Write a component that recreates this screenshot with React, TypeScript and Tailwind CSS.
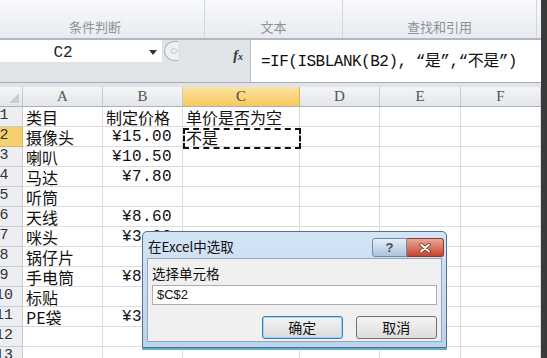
import React from 'react';

const cjk = { fontFamily: '"Noto Sans CJK SC", "Noto Sans", sans-serif' };
const mono = { fontFamily: '"Liberation Mono", "Noto Sans CJK SC", monospace' };

const cols = [
    { key: 'A', w: 80 },
    { key: 'B', w: 80 },
    { key: 'C', w: 117 },
    { key: 'D', w: 80 },
    { key: 'E', w: 81 },
    { key: 'F', w: 80 },
];

const rows: [string, string, string][] = [
    ['类目', '制定价格', '单价是否为空'],
    ['摄像头', '¥15.00', '不是'],
    ['喇叭', '¥10.50', ''],
    ['马达', '¥7.80', ''],
    ['听筒', '', ''],
    ['天线', '¥8.60', ''],
    ['咪头', '¥3.20', ''],
    ['锅仔片', '', ''],
    ['手电筒', '¥8.90', ''],
    ['标贴', '', ''],
    ['PE袋', '¥3.50', ''],
    ['', '', ''],
    ['', '', ''],
];

const Ribbon = () => (
    <div className="h-[40px] shrink-0 flex bg-gradient-to-b from-[#f8f9fb] to-[#e8ebef] border-b-2 border-[#b3b8c0]">
        {[
            { label: '条件判断', w: 205, cls: 'pr-[14px]' },
            { label: '文本', w: 138, cls: '' },
            { label: '查找和引用', w: 194, cls: '' },
        ].map((g) => (
            <div
                key={g.label}
                style={{ width: g.w }}
                className={'h-full flex items-end justify-center pb-[2px] border-r border-[#d3d7dd] text-[13px] text-[#8c929b] ' + g.cls}
            >
                <span style={cjk}>{g.label}</span>
            </div>
        ))}
        <div className="flex-1" />
    </div>
);

const FormulaBar = () => (
    <div className="h-[43px] shrink-0 flex bg-[#e0e4e9] border-b border-[#a9aeb6]">
        <div className="w-[250px] flex flex-col">
            <div className="h-[22px] flex items-center">
                <div className="w-[162px] h-full bg-white flex items-center relative">
                    <span className="flex-1 text-center text-[16px] text-[#222] pr-[36px] pt-[4px]" style={mono}>C2</span>
                    <span className="absolute left-[149px] top-[10px] w-0 h-0 border-l-[4px] border-r-[4px] border-t-[5px] border-l-transparent border-r-transparent border-t-[#333]" />
                </div>
                <div className="w-[14px] h-[20px] ml-[2px] rounded-l-full border border-r-0 border-[#aab0b8] bg-[#eef0f3] flex items-center justify-center">
                    <div className="w-[6px] h-[6px] rounded-full border border-[#c6cad0] ml-[4px]" />
                </div>
                <div className="flex-1 flex justify-end pr-[7px] pt-[8px]">
                    <span className="text-[14px] italic font-bold text-[#333]" style={{ fontFamily: '"Liberation Serif", serif' }}>
                        f<span className="text-[10px]">x</span>
                    </span>
                </div>
            </div>
        </div>
        <div className="flex-1 bg-white border-l border-[#b8bdc4] pl-[10px] pt-[8px]">
            <span className="text-[16px] text-[#111] whitespace-nowrap tracking-[-0.5px]" style={mono}>
                =IF(ISBLANK(B2), “是”,“不是”)
            </span>
        </div>
    </div>
);

const HeaderRow = () => (
    <div className="h-[20px] shrink-0 flex border-b border-[#aab1b9]">
        <div className="w-[23px] h-full bg-gradient-to-b from-[#f4f5f7] to-[#e3e6ea] border-r border-[#c3c7cd] relative">
            <span className="absolute right-[3px] bottom-[3px] w-[10px] h-[10px] bg-[#c9cdd3] [clip-path:polygon(100%_0,100%_100%,0_100%)]" />
        </div>
        {cols.map((c) => (
            <div
                key={c.key}
                style={{ width: c.w }}
                className={
                    'h-full flex items-center justify-center border-r text-[15px] ' +
                    (c.key === 'C'
                        ? 'bg-gradient-to-b from-[#fbe3a0] to-[#f6c95a] border-[#e2b34a] text-[#444]'
                        : 'bg-gradient-to-b from-[#f4f5f7] to-[#e3e6ea] border-[#c6cad0] text-[#555]')
                }
            >
                <span style={{ fontFamily: '"Liberation Serif", serif' }}>{c.key}</span>
            </div>
        ))}
    </div>
);

const Grid = () => (
    <div className="flex flex-col shrink-0">
        {rows.map((r, i) => (
            <div key={i} className="h-[20px] flex shrink-0">
                <div
                    className={
                        'w-[23px] h-full overflow-hidden border-r border-b ' +
                        (i === 1 ? 'bg-[#f6cf6e] border-[#e2b34a]' : 'bg-[#eceef1] border-[#c9cdd3]')
                    }
                >
                    <div className="w-[46px] -ml-[19px] h-full flex items-center justify-center text-[15px] text-[#333]" style={mono}>
                        {i + 1}
                    </div>
                </div>
                {cols.map((c, ci) => {
                    const v = ci < 3 ? r[ci] : '';
                    const isNum = ci === 1 && i > 0;
                    return (
                        <div
                            key={c.key}
                            style={{ width: c.w }}
                            className={
                                'h-full border-r border-b border-[#dadcdf] bg-white flex items-center overflow-visible whitespace-nowrap text-[16px] text-[#111] ' +
                                (isNum ? 'justify-end pr-[10px]' : 'pl-[3px]')
                            }
                        >
                            {v && (
                                <span style={isNum ? mono : cjk} className={isNum ? 'tracking-[0.4px] leading-none' : 'leading-none'}>
                                    {v}
                                </span>
                            )}
                        </div>
                    );
                })}
            </div>
        ))}
    </div>
);

const Dialog = () => (
    <div className="absolute left-[142px] top-[231px] w-[305px] h-[117px] rounded-t-[5px] border border-[#52708f] bg-gradient-to-b from-[#d3e4f5] to-[#bdd3ea] shadow-[0_2px_0_#5fb0cf]">
        <div className="h-[26px] flex items-center pl-[5px] pt-[3px]">
            <span className="text-[13.5px] text-[#111]" style={cjk}>在Excel中选取</span>
        </div>
        <div className="absolute left-[229px] top-[6px] flex">
            <div className="w-[35px] h-[19px] rounded-l-[3px] border border-[#6f8cab] bg-gradient-to-b from-[#e6eef7] to-[#aec3da] flex items-center justify-center text-[13px] font-bold text-[#3b4e66]" style={{ fontFamily: '"Liberation Sans", sans-serif' }}>
                ?
            </div>
            <div className="w-[37px] h-[19px] rounded-r-[3px] border border-l-0 border-[#8a3a2e] bg-gradient-to-b from-[#e8a798] to-[#c4412c] flex items-center justify-center">
                <svg width="12" height="10" viewBox="0 0 12 10">
                    <path d="M2 1.5 L10 8.5 M10 1.5 L2 8.5" stroke="#6b2016" strokeWidth="3.4" strokeLinecap="round" />
                    <path d="M2 1.5 L10 8.5 M10 1.5 L2 8.5" stroke="#fff" strokeWidth="2" strokeLinecap="round" />
                </svg>
            </div>
        </div>
        <div className="mx-[4px] h-[84px] bg-[#f0f0f0] border border-[#8ea8c3] px-[4px] pt-[4px] flex flex-col">
            <span className="text-[13.5px] text-[#111] leading-[20px]" style={cjk}>选择单元格</span>
            <div className="mt-[2px] h-[20px] bg-white border border-[#abadb3] flex items-center pl-[4px]">
                <span className="text-[13px] text-[#111]" style={{ fontFamily: '"Liberation Sans", sans-serif' }}>$C$2</span>
            </div>
            <div className="mt-[11px] flex pl-[110px] gap-[13px]">
                <div className="w-[81px] h-[23px] rounded-[3px] border border-[#3c7fb1] shadow-[inset_0_0_0_1px_#9ad5f5] bg-gradient-to-b from-[#f4f4f4] to-[#dcdcdc] flex items-center justify-center text-[14px] text-[#111]" style={cjk}>
                    确定
                </div>
                <div className="w-[82px] h-[23px] rounded-[3px] border border-[#707070] bg-gradient-to-b from-[#f4f4f4] to-[#dcdcdc] flex items-center justify-center text-[14px] text-[#111]" style={cjk}>
                    取消
                </div>
            </div>
        </div>
    </div>
);

const App = () => {
    return (
        <div className="w-[547px] h-[358px] overflow-hidden flex bg-white">
            <div className="w-[541px] h-full flex flex-col relative overflow-hidden">
                <Ribbon />
                <FormulaBar />
                <div className="h-[4px] bg-[#e0e4e9] shrink-0" />
                <HeaderRow />
                <Grid />
                {/* marching ants on C2 */}
                <div className="absolute left-[183px] top-[128px] w-[118px] h-[21px] border-2 border-dashed border-[#111] pointer-events-none" />
                <Dialog />
            </div>
            <div className="w-[6px] h-full bg-[#3b3b3b]" />
        </div>
    );
};

export default App;
